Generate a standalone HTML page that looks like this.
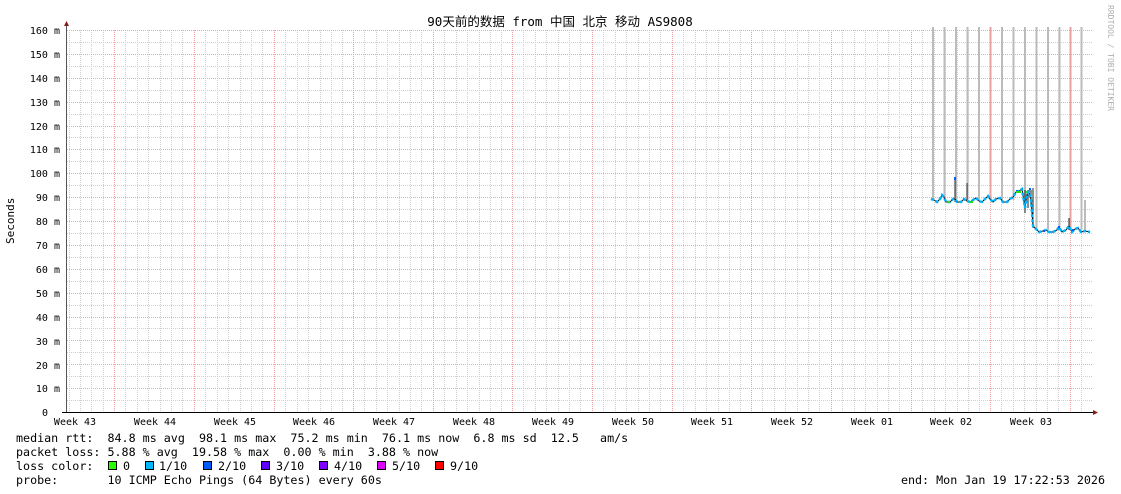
<!DOCTYPE html>
<html><head><meta charset="utf-8"><style>
html,body{margin:0;padding:0;background:#fff;}
svg{display:block;}
text{font-family:"DejaVu Sans Mono","Liberation Mono",monospace;white-space:pre;}
</style></head><body>
<svg width="1121" height="494" viewBox="0 0 1121 494" xmlns="http://www.w3.org/2000/svg">
<defs>
<g id="wk" stroke="#cfcfcf" stroke-dasharray="1 1">
<line x1="11.5" y1="30" x2="11.5" y2="412"/><line x1="23.5" y1="30" x2="23.5" y2="412"/>
<line x1="34.5" y1="30" x2="34.5" y2="412"/><line x1="46.5" y1="30" x2="46.5" y2="412"/>
<line x1="57.5" y1="30" x2="57.5" y2="412"/><line x1="68.5" y1="30" x2="68.5" y2="412"/>
</g>
</defs>
<rect width="1121" height="494" fill="#fff"/>
<g stroke="#cfcfcf" stroke-dasharray="1 1">
<line x1="69.5" y1="30" x2="69.5" y2="412"/><line x1="80.5" y1="30" x2="80.5" y2="412"/>
<line x1="91.5" y1="30" x2="91.5" y2="412"/><line x1="103.5" y1="30" x2="103.5" y2="412"/>
</g>
<use href="#wk" x="114"/><use href="#wk" x="194"/><use href="#wk" x="274"/><use href="#wk" x="353"/>
<use href="#wk" x="433"/><use href="#wk" x="512"/><use href="#wk" x="592"/><use href="#wk" x="672"/>
<use href="#wk" x="751"/><use href="#wk" x="831"/><use href="#wk" x="911"/><use href="#wk" x="990"/>
<g stroke="#cfcfcf" stroke-dasharray="1 1">
<line x1="1081.5" y1="30" x2="1081.5" y2="412"/>
</g>
<g stroke="#cfcfcf" stroke-dasharray="1 1">
<line x1="67" y1="42.5" x2="1093" y2="42.5"/><line x1="67" y1="66.5" x2="1093" y2="66.5"/>
<line x1="67" y1="90.5" x2="1093" y2="90.5"/><line x1="67" y1="114.5" x2="1093" y2="114.5"/>
<line x1="67" y1="137.5" x2="1093" y2="137.5"/><line x1="67" y1="161.5" x2="1093" y2="161.5"/>
<line x1="67" y1="185.5" x2="1093" y2="185.5"/><line x1="67" y1="209.5" x2="1093" y2="209.5"/>
<line x1="67" y1="233.5" x2="1093" y2="233.5"/><line x1="67" y1="257.5" x2="1093" y2="257.5"/>
<line x1="67" y1="281.5" x2="1093" y2="281.5"/><line x1="67" y1="305.5" x2="1093" y2="305.5"/>
<line x1="67" y1="328.5" x2="1093" y2="328.5"/><line x1="67" y1="352.5" x2="1093" y2="352.5"/>
<line x1="67" y1="376.5" x2="1093" y2="376.5"/><line x1="67" y1="400.5" x2="1093" y2="400.5"/>
</g>
<g stroke="#f0a0a0" stroke-dasharray="1 1">
<line x1="114.5" y1="30" x2="114.5" y2="412"/><line x1="194.5" y1="30" x2="194.5" y2="412"/>
<line x1="274.5" y1="30" x2="274.5" y2="412"/><line x1="353.5" y1="30" x2="353.5" y2="412"/>
<line x1="433.5" y1="30" x2="433.5" y2="412"/><line x1="512.5" y1="30" x2="512.5" y2="412"/>
<line x1="592.5" y1="30" x2="592.5" y2="412"/><line x1="672.5" y1="30" x2="672.5" y2="412"/>
<line x1="751.5" y1="30" x2="751.5" y2="412"/><line x1="831.5" y1="30" x2="831.5" y2="412"/>
<line x1="911.5" y1="30" x2="911.5" y2="412"/><line x1="990.5" y1="30" x2="990.5" y2="412"/>
<line x1="1070.5" y1="30" x2="1070.5" y2="412"/>
</g>
<g stroke="#eeaaaa" stroke-dasharray="1 1">
<line x1="67" y1="30.5" x2="1093" y2="30.5"/><line x1="67" y1="54.5" x2="1093" y2="54.5"/>
<line x1="67" y1="78.5" x2="1093" y2="78.5"/><line x1="67" y1="102.5" x2="1093" y2="102.5"/>
<line x1="67" y1="126.5" x2="1093" y2="126.5"/><line x1="67" y1="149.5" x2="1093" y2="149.5"/>
<line x1="67" y1="173.5" x2="1093" y2="173.5"/><line x1="67" y1="197.5" x2="1093" y2="197.5"/>
<line x1="67" y1="221.5" x2="1093" y2="221.5"/><line x1="67" y1="245.5" x2="1093" y2="245.5"/>
<line x1="67" y1="269.5" x2="1093" y2="269.5"/><line x1="67" y1="293.5" x2="1093" y2="293.5"/>
<line x1="67" y1="317.5" x2="1093" y2="317.5"/><line x1="67" y1="340.5" x2="1093" y2="340.5"/>
<line x1="67" y1="364.5" x2="1093" y2="364.5"/><line x1="67" y1="388.5" x2="1093" y2="388.5"/>
</g>

<text x="560" y="26" font-size="12.5" text-anchor="middle" style="font-family:'DejaVu Sans Mono','Noto Sans CJK SC',monospace;white-space:normal">90天前的数据 from 中国 北京 移动 AS9808</text>
<text transform="translate(1108,5) rotate(90)" font-size="8" fill="#b0b0b0">RRDTOOL / TOBI OETIKER</text>
<text transform="translate(14,244) rotate(-90)" font-size="11">Seconds</text>

<g font-size="10" text-anchor="end">
<text x="60" y="34">160 m</text><text x="60" y="58">150 m</text><text x="60" y="82">140 m</text><text x="60" y="106">130 m</text>
<text x="60" y="130">120 m</text><text x="60" y="153">110 m</text><text x="60" y="177">100 m</text><text x="60" y="201">90 m</text>
<text x="60" y="225">80 m</text><text x="60" y="249">70 m</text><text x="60" y="273">60 m</text><text x="60" y="297">50 m</text>
<text x="60" y="321">40 m</text><text x="60" y="345">30 m</text><text x="60" y="369">20 m</text><text x="60" y="392">10 m</text>
<text x="48" y="416">0</text>
</g>
<g font-size="10" text-anchor="middle">
<text x="75" y="425">Week 43</text><text x="155" y="425">Week 44</text><text x="235" y="425">Week 45</text>
<text x="314" y="425">Week 46</text><text x="394" y="425">Week 47</text><text x="474" y="425">Week 48</text>
<text x="553" y="425">Week 49</text><text x="633" y="425">Week 50</text><text x="712" y="425">Week 51</text>
<text x="792" y="425">Week 52</text><text x="872" y="425">Week 01</text><text x="951" y="425">Week 02</text>
<text x="1031" y="425">Week 03</text>
</g>

<!-- smoke -->
<g stroke="#bbb" stroke-width="2">
<line x1="933" y1="27" x2="933" y2="200"/><line x1="944.5" y1="27" x2="944.5" y2="200"/>
<line x1="956" y1="27" x2="956" y2="200"/><line x1="967.5" y1="27" x2="967.5" y2="200"/>
<line x1="979" y1="27" x2="979" y2="200"/><line x1="990.5" y1="27" x2="990.5" y2="200" stroke="#e8a0a0"/>
<line x1="1002" y1="27" x2="1002" y2="200"/><line x1="1013.5" y1="27" x2="1013.5" y2="200"/>
<line x1="1025" y1="27" x2="1025" y2="200"/><line x1="1036.5" y1="27" x2="1036.5" y2="230"/>
<line x1="1048" y1="27" x2="1048" y2="230"/><line x1="1059.5" y1="27" x2="1059.5" y2="230"/>
<line x1="1070.5" y1="27" x2="1070.5" y2="230" stroke="#e8a0a0"/><line x1="1081.5" y1="27" x2="1081.5" y2="230"/>
<line x1="1085" y1="200" x2="1085" y2="232"/>
</g>
<g stroke="#222" stroke-width="1">
<line x1="955" y1="178" x2="955" y2="202"/><line x1="967" y1="183" x2="967" y2="200"/>
<line x1="1025" y1="190" x2="1025" y2="213"/><line x1="1028" y1="190" x2="1028" y2="208"/><line x1="1031" y1="190" x2="1031" y2="205"/>
<line x1="1033" y1="188" x2="1033" y2="228"/><line x1="1069" y1="218" x2="1069" y2="230"/>
</g>
<polyline fill="none" stroke="#111" stroke-width="1" points="931,199 934,200 937,202 940,199 942,195 944,197 946,202 950,202 953,199 955,199 957,202 961,202 964,199 967,201 970,202 973,200 976,198 979,201 982,202 985,199 988,196 990,199 993,202 996,199 1000,198 1003,202 1007,202 1010,199 1013,197 1016,192 1019,191 1022,189 1025,208 1027,194 1029,192 1031,200 1033,226 1036,229 1039,232 1043,231 1046,230 1049,232 1053,232 1057,230 1059,227 1062,232 1066,230 1069,226 1072,232 1075,229 1078,228 1081,232 1085,231 1090,232"/>
<polyline fill="none" stroke="#00b4ff" stroke-width="2.5" stroke-dasharray="3 2" points="931,199 934,200 937,202 940,199 942,195 944,197 946,202 950,202 953,199 955,199 957,202 961,202 964,199 967,201 970,202 973,200 976,198 979,201 982,202 985,199 988,196 990,199 993,202 996,199 1000,198 1003,202 1007,202 1010,199 1013,197 1016,192 1019,191 1022,189 1025,208 1027,194 1029,192 1031,200 1033,226 1036,229 1039,232 1043,231 1046,230 1049,232 1053,232 1057,230 1059,227 1062,232 1066,230 1069,226 1072,232 1075,229 1078,228 1081,232 1085,231 1090,232"/>
<g fill="#0060ff"><rect x="954" y="177" width="2" height="3"/><rect x="1016" y="190" width="2" height="2"/><rect x="1029" y="188" width="2" height="2"/><rect x="1043" y="230" width="2" height="2"/><rect x="1058" y="226" width="2" height="2"/><rect x="1072" y="229" width="2" height="2"/></g>
<g fill="#22dd22"><rect x="947" y="201" width="3" height="2"/><rect x="970" y="201" width="3" height="2"/><rect x="1016" y="191" width="5" height="2"/><rect x="1026" y="191" width="2" height="2"/></g>

<!-- axes -->
<line x1="66.5" y1="24" x2="66.5" y2="413" stroke="#555" stroke-width="1"/>
<line x1="62" y1="412.5" x2="1095" y2="412.5" stroke="#000" stroke-width="1"/>
<polygon points="64,26 69,26 66.5,21" fill="#8b1a1a"/>
<polygon points="1093,410 1093,415 1098,412.5" fill="#8b1a1a"/>

<g font-size="11.7">
<text x="16" y="442">median rtt:  84.8 ms avg  98.1 ms max  75.2 ms min  76.1 ms now  6.8 ms sd  12.5   am/s</text>
<text x="16" y="456">packet loss: 5.88 % avg  19.58 % max  0.00 % min  3.88 % now</text>
<text x="16" y="470">loss color:</text>
<text x="123" y="470">0</text><text x="159" y="470">1/10</text><text x="218" y="470">2/10</text>
<text x="276" y="470">3/10</text><text x="334" y="470">4/10</text><text x="392" y="470">5/10</text><text x="450" y="470">9/10</text>
<text x="16" y="484">probe:       10 ICMP Echo Pings (64 Bytes) every 60s</text>
<text x="1105" y="484" text-anchor="end">end: Mon Jan 19 17:22:53 2026</text>
</g>
<g stroke="#000" stroke-width="1">
<rect x="108.5" y="461.5" width="8" height="8" fill="#26ff00"/>
<rect x="145.5" y="461.5" width="8" height="8" fill="#00b8ff"/>
<rect x="203.5" y="461.5" width="8" height="8" fill="#0059ff"/>
<rect x="261.5" y="461.5" width="8" height="8" fill="#5e00ff"/>
<rect x="319.5" y="461.5" width="8" height="8" fill="#7e00ff"/>
<rect x="377.5" y="461.5" width="8" height="8" fill="#dd00ff"/>
<rect x="435.5" y="461.5" width="8" height="8" fill="#ff0000"/>
</g>
</svg>
</body></html>
